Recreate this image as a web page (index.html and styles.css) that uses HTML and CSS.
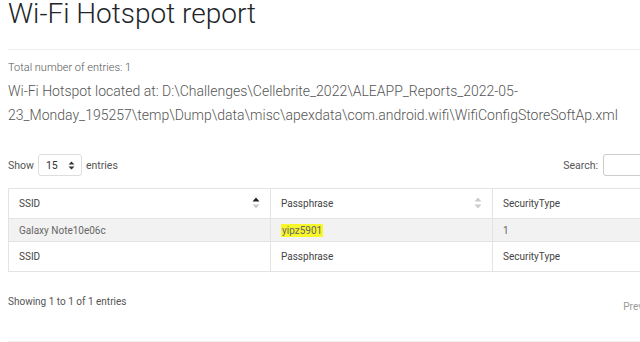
FILE: index.html
```html
<!DOCTYPE html>
<html>
<head>
<meta charset="utf-8">
<link rel="stylesheet" href="styles.css">
</head>
<body>
<div class="page">
  <h1 class="title">Wi-Fi Hotspot report</h1>
  <hr class="rule">
  <p class="total">Total number of entries: 1</p>
  <p class="located">Wi-Fi Hotspot located at: D:\Challenges\Cellebrite_2022\ALEAPP_Reports_2022-05-23_Monday_195257\temp\Dump\data\misc\apexdata\com.android.wifi\WifiConfigStoreSoftAp.xml</p>
  <div class="controls">
    <div class="length">Show <span class="select">15 <svg class="updown" width="7" height="9" viewBox="0 0 7 9"><path d="M3.5 0.5 L6.5 3.5 H0.5 Z M3.5 8.5 L6.5 5.5 H0.5 Z" fill="#333"/></svg></span> entries</div>
    <div class="search">Search: <span class="input"></span></div>
  </div>
  <table class="data">
    <thead>
      <tr>
        <th class="c1">SSID <svg class="sort" width="8" height="12" viewBox="0 0 8 12"><path d="M4 0.5 L7.5 4.5 H0.5 Z" fill="#222"/><path d="M4 11.5 L7.5 7.5 H0.5 Z" fill="#ccc"/></svg></th>
        <th class="c2">Passphrase <svg class="sort" width="8" height="12" viewBox="0 0 8 12"><path d="M4 0.5 L7.5 4.5 H0.5 Z" fill="#ccc"/><path d="M4 11.5 L7.5 7.5 H0.5 Z" fill="#ccc"/></svg></th>
        <th class="c3">SecurityType</th>
      </tr>
    </thead>
    <tbody>
      <tr class="odd">
        <td>Galaxy Note10e06c</td>
        <td><span class="hl">yipz5901</span></td>
        <td>1</td>
      </tr>
    </tbody>
    <tfoot>
      <tr>
        <th>SSID</th>
        <th>Passphrase</th>
        <th>SecurityType</th>
      </tr>
    </tfoot>
  </table>
  <div class="bottom">
    <div class="info">Showing 1 to 1 of 1 entries</div>
    <div class="paginate">Prev</div>
  </div>
  <hr class="rule2">
</div>
</body>
</html>
```
FILE: styles.css
```css
html, body { margin: 0; padding: 0; background: #fff; overflow: hidden; }
body { font-family: Roboto, "Noto Sans", sans-serif; color: #666; }
.page { padding: 0 0 0 8px; width: 720px; }
.title { font-weight: 300; font-size: 28px; color: #212529; margin: -3px 0 0 0; line-height: 34px; }
.rule { border: 0; border-top: 1px solid #eee; margin: 18px 0 0 0; height: 0; }
.total { font-size: 11px; font-weight: 300; color: #555; margin: 11px 0 0 0; line-height: 14px; }
.located { font-size: 14px; font-weight: 300; color: #555; margin: 4px 0 0 0; line-height: 24px; width: 632px; }
.controls { display: flex; justify-content: space-between; align-items: center; margin-top: 27px; width: 720px; font-size: 10.5px; color: #555; }
.length { display: flex; align-items: center; gap: 4px; }
.select { display: inline-flex; align-items: center; justify-content: space-between; width: 44px; height: 22px; box-sizing: border-box; border: 1px solid #ddd; border-radius: 3px; padding: 0 6px 0 7px; font-size: 10.5px; color: #333; }
.search { display: flex; align-items: center; gap: 5px; margin-right: 15px; }
.input { display: inline-block; width: 110px; height: 22px; box-sizing: border-box; border: 1px solid #ccc; border-radius: 3px; }
.data { border-collapse: collapse; margin-top: 12px; font-size: 10px; table-layout: fixed; width: 720px; }
.data th, .data td { border: 1px solid #e3e3e3; text-align: left; font-weight: 400; padding: 0 10px; }
.data thead th { height: 29px; color: #444; position: relative; }
.c1 { width: 241px; }
.c2 { width: 201px; }
.sort { position: absolute; right: 10px; top: 8px; }
.data td { height: 22px; color: #666; }
.odd td { background: #f2f2f2; }
.hl { background: #f7f72a; padding: 1px 1px; color: #666; }
.data tfoot th { height: 29px; color: #444; }
.bottom { display: flex; justify-content: space-between; width: 632px; margin-top: 23px; font-size: 10px; line-height: 13px; }
.info { color: #555; }
.paginate { color: #999; margin-top: 5px; margin-right: -3px; }
.rule2 { border: 0; border-top: 1px solid #eee; margin: 28px 0 0 0; height: 0; }
```
